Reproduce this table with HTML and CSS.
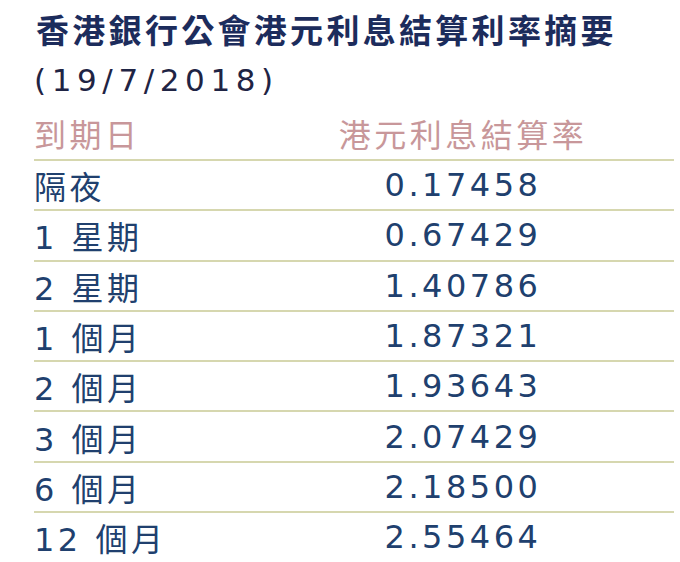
FILE: index.html
```html
<!DOCTYPE html>
<html lang="zh-Hant">
<head>
<meta charset="utf-8">
<title>香港銀行公會港元利息結算利率摘要</title>
<link rel="stylesheet" href="styles.css">
</head>
<body>
<div class="page">
  <h1 class="title">
    <span class="title-main">香港銀行公會港元利息結算利率摘要</span>
    <span class="title-date">(19/7/2018)</span>
  </h1>
  <table class="rates">
    <thead>
      <tr><th class="term">到期日</th><th class="rate">港元利息結算率</th></tr>
    </thead>
    <tbody>
      <tr><td class="term">隔夜</td><td class="rate">0.17458</td></tr>
      <tr><td class="term">1 星期</td><td class="rate">0.67429</td></tr>
      <tr><td class="term">2 星期</td><td class="rate">1.40786</td></tr>
      <tr><td class="term">1 個月</td><td class="rate">1.87321</td></tr>
      <tr><td class="term">2 個月</td><td class="rate">1.93643</td></tr>
      <tr><td class="term">3 個月</td><td class="rate">2.07429</td></tr>
      <tr><td class="term">6 個月</td><td class="rate">2.18500</td></tr>
      <tr><td class="term">12 個月</td><td class="rate">2.55464</td></tr>
    </tbody>
  </table>
</div>
</body>
</html>
```
FILE: styles.css
```css
html, body {
  margin: 0;
  padding: 0;
  background: #ffffff;
}

.page {
  padding: 8px 0 0 34px;
  font-family: "DejaVu Sans", "Noto Sans CJK TC", sans-serif;
}

.title {
  margin: 0;
  font-weight: normal;
}

.title-main {
  display: block;
  font-size: 33px;
  line-height: 48px;
  font-weight: 700;
  letter-spacing: 3.3px;
  color: #1c2c5c;
  padding-left: 2px;
}

.title-date {
  display: block;
  font-size: 31px;
  line-height: 48px;
  letter-spacing: 5.6px;
  color: #1f2444;
}

.rates {
  margin-top: 2px;
  width: 640px;
  border-collapse: collapse;
  font-size: 32px;
  letter-spacing: 3.5px;
}

.rates th,
.rates td {
  padding: 0;
  font-weight: normal;
  border-bottom: 2px solid #d6d7af;
}

.rates th {
  height: 53px;
  color: #c8979a;
  vertical-align: middle;
}

.rates td {
  height: 48.3px;
  color: #20406e;
  vertical-align: middle;
}

.rates tbody tr:last-child td {
  border-bottom: none;
}

.rates .term {
  width: 218px;
  text-align: left;
}

.rates .rate {
  text-align: center;
}
```
